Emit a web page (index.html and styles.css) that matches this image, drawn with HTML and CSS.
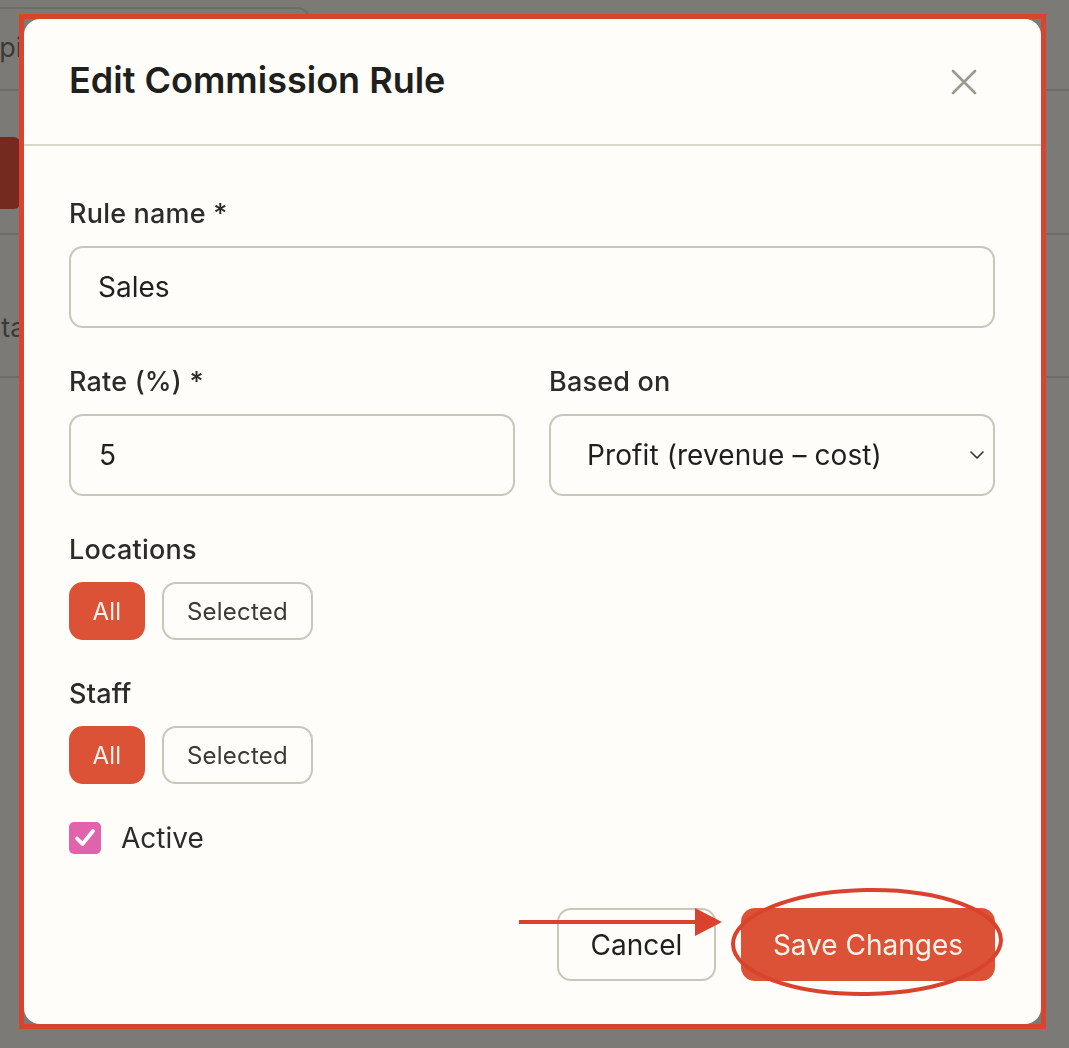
FILE: index.html
```html
<!DOCTYPE html>
<html lang="en">
<head>
<meta charset="utf-8">
<title>Edit Commission Rule</title>
<link rel="stylesheet" href="styles.css">
</head>
<body>
<div class="page">
  <div class="page-top">
    <div class="page-tab"><span class="page-tab-text">Spiffs</span></div>
  </div>
  <div class="page-actions">
    <div class="page-btn"></div>
  </div>
  <div class="page-row"><span class="page-row-text">Status</span></div>
</div>

<div class="overlay">
  <div class="modal">
    <div class="modal-header">
      <h2 class="modal-title">Edit Commission Rule</h2>
      <button class="close-btn" aria-label="Close">
        <svg width="26" height="26" viewBox="0 0 26 26"><path d="M2 2 L24 24 M24 2 L2 24" stroke="#9b9a90" stroke-width="2.6" stroke-linecap="round" fill="none"/></svg>
      </button>
    </div>
    <div class="modal-body">
      <div class="field">
        <label class="label">Rule name *</label>
        <div class="input">Sales</div>
      </div>
      <div class="row">
        <div class="field">
          <label class="label">Rate (%) *</label>
          <div class="input input-rate">5</div>
        </div>
        <div class="field">
          <label class="label">Based on</label>
          <div class="input select">
            <span>Profit (revenue – cost)</span>
            <svg class="chev" width="14" height="8" viewBox="0 0 14 8"><path d="M1 1 L7 7 L13 1" stroke="#333" stroke-width="1.6" fill="none" stroke-linecap="round" stroke-linejoin="round"/></svg>
          </div>
        </div>
      </div>
      <div class="field">
        <label class="label">Locations</label>
        <div class="toggles">
          <button class="tog tog-on">All</button>
          <button class="tog">Selected</button>
        </div>
      </div>
      <div class="field">
        <label class="label">Staff</label>
        <div class="toggles">
          <button class="tog tog-on">All</button>
          <button class="tog">Selected</button>
        </div>
      </div>
      <div class="check-row">
        <span class="checkbox">
          <svg width="24" height="24" viewBox="0 0 24 24"><path d="M4 12.5 L9.5 18 L20 5" stroke="#fff" stroke-width="3.8" fill="none" stroke-linecap="round" stroke-linejoin="round"/></svg>
        </span>
        <span class="check-label">Active</span>
      </div>
      <div class="footer">
        <button class="btn btn-cancel">Cancel</button>
        <button class="btn btn-save">Save Changes</button>
      </div>
    </div>
  </div>
</div>

<div class="anno-rect"></div>
<svg class="anno-arrow" width="210" height="30" viewBox="0 0 210 30">
  <path d="M0 15 L180 15" stroke="#d9432e" stroke-width="4" fill="none"/>
  <path d="M176 1 L203 15 L176 29 Z" fill="#d9432e"/>
</svg>
<svg class="anno-ellipse" width="280" height="116" viewBox="0 0 280 116">
  <ellipse cx="138" cy="56" rx="134" ry="52" stroke="#d9432e" stroke-width="4" fill="none" transform="rotate(-1 138 56)"/>
</svg>
</body>
</html>
```

FILE: styles.css
```css
* { box-sizing: border-box; }
html, body { margin: 0; height: 100%; }
body {
  background: #7b7a76;
  font-family: Inter, "Noto Sans", "Liberation Sans", sans-serif;
  color: #2a2a28;
  overflow: hidden;
}

/* dimmed page behind the dialog */
.page { display: flex; flex-direction: column; }
.page-top {
  height: 91px;
  padding-top: 7px;
  border-bottom: 2px solid #6d6c69;
}
.page-tab {
  width: 312px;
  height: 84px;
  margin-left: -2px;
  border: 2px solid #6d6c69;
  border-left: none;
  border-bottom: none;
  border-top-right-radius: 12px;
  padding: 22px 0 0 0;
  overflow: hidden;
}
.page-tab-text {
  display: block;
  margin-left: -16px;
  font-size: 27px;
  color: #3c3a38;
  white-space: nowrap;
}
.page-actions {
  height: 144px;
  padding-top: 46px;
  border-bottom: 2px solid #6d6c69;
}
.page-btn {
  width: 200px;
  height: 72px;
  margin-left: -180px;
  background: #742a1e;
  border-radius: 6px;
}
.page-row {
  height: 143px;
  padding-top: 76px;
  border-bottom: 2px solid #6d6c69;
}
.page-row-text {
  display: block;
  margin-left: -16px;
  font-size: 27px;
  color: #3c3a38;
}

/* dialog */
.overlay {
  position: fixed;
  inset: 0;
  display: flex;
  padding: 19px 28px 24px 24px;
}
.modal {
  flex: 1;
  background: #fefdf9;
  border-radius: 16px;
  display: flex;
  flex-direction: column;
}
.modal-header {
  height: 127px;
  display: flex;
  align-items: center;
  justify-content: space-between;
  padding: 0 64px 0 45px;
  border-bottom: 2px solid #d9d6ca;
}
.modal-title {
  margin: 0;
  font-size: 36px;
  font-weight: 600;
  color: #1f1f1d;
  margin-top: -3px;
}
.close-btn {
  border: none;
  background: none;
  padding: 0;
  display: flex;
  cursor: pointer;
}
.modal-body {
  flex: 1;
  display: flex;
  flex-direction: column;
  gap: 38px;
  padding: 52px 46px 0 45px;
}
.field { display: flex; flex-direction: column; gap: 17px; min-width: 0; }
.row { display: grid; grid-template-columns: 1fr 1fr; gap: 34px; }
.label {
  font-size: 27px;
  line-height: 31px;
  font-weight: 500;
  letter-spacing: 0.2px;
  color: #2b2b29;
}
.input {
  height: 82px;
  border: 2px solid #c9c7ba;
  border-radius: 14px;
  display: flex;
  align-items: center;
  padding: 0 27px;
  font-size: 28px;
  color: #1f1f1d;
}
.input-rate { padding-left: 28px; }
.select {
  justify-content: space-between;
  padding: 0 9px 0 36px;
}
.select span { letter-spacing: 0.1px; }
.toggles { display: flex; gap: 17px; }
.tog {
  height: 58px;
  padding: 0 23px;
  border: 2px solid #c9c7ba;
  border-radius: 14px;
  background: #fefdf9;
  font-family: inherit;
  font-size: 24px;
  letter-spacing: 0.2px;
  color: #3a3a37;
}
.tog-on {
  background: #dc5236;
  border-color: #dc5236;
  color: #fff5ee;
  width: 76px;
  padding: 0;
}
.check-row {
  display: flex;
  align-items: center;
  gap: 20px;
  margin-top: -1px;
}
.checkbox {
  width: 32px;
  height: 32px;
  border-radius: 5px;
  background: #e063ac;
  display: flex;
  align-items: center;
  justify-content: center;
}
.check-label { font-size: 28px; color: #2b2b29; }
.footer {
  display: flex;
  justify-content: flex-end;
  gap: 25px;
  margin-top: 15px;
}
.btn {
  height: 73px;
  border-radius: 14px;
  font-family: inherit;
  font-size: 28px;
  cursor: pointer;
}
.btn-cancel {
  width: 159px;
  border: 2px solid #c9c7ba;
  background: #fefdf9;
  color: #1f1f1d;
}
.btn-save {
  width: 254px;
  border: none;
  background: #dc5236;
  color: #fff4ec;
}

/* annotation marks */
.anno-rect {
  position: fixed;
  left: 19px;
  top: 14px;
  width: 1027px;
  height: 1015px;
  border: 5px solid #d9442f;
  pointer-events: none;
}
.anno-arrow {
  position: fixed;
  left: 519px;
  top: 907px;
}
.anno-ellipse {
  position: fixed;
  left: 729px;
  top: 886px;
}
```
